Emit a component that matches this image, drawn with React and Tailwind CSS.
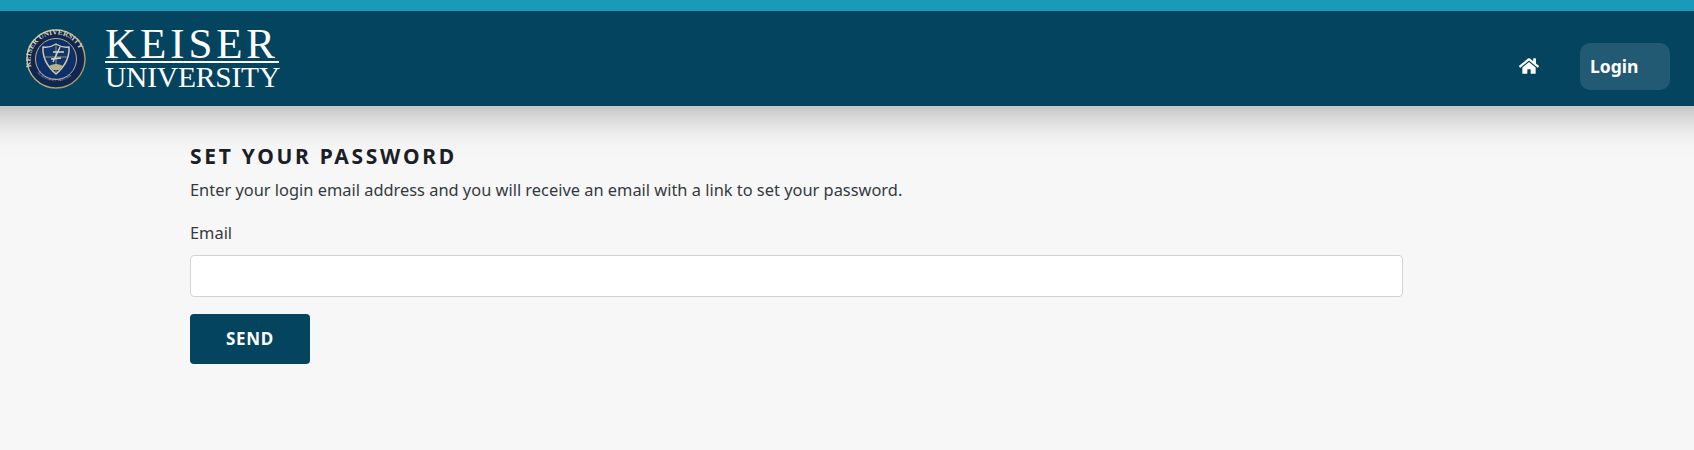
import React from "react";
import { FaHome } from "react-icons/fa";

function Seal() {
  return (
    <svg width="60" height="60" viewBox="0 0 60 60" className="shrink-0">
      <defs>
        <path id="ring" d="M5.5 38 A25.5 25.5 0 1 1 54.5 38" />
        <path id="ringb" d="M9 40 A24 24 0 0 0 51 40" />
        <linearGradient id="gold" x1="0" y1="0" x2="1" y2="1">
          <stop offset="0" stopColor="#d8d2a8" />
          <stop offset="1" stopColor="#9a8f58" />
        </linearGradient>
      </defs>
      <circle cx="30" cy="30" r="29" fill="#10264f" stroke="url(#gold)" strokeWidth="1.4" />
      <circle cx="30" cy="30" r="20.5" fill="#0d2f6b" stroke="#b9b184" strokeWidth="1" />
      <text fill="#d5d2bd" fontSize="7.4" fontWeight="700" fontFamily="'Liberation Serif', serif">
        <textPath href="#ring">KEISER UNIVERSITY</textPath>
      </text>
      <text fill="#aeb6c4" fontSize="3.6" fontFamily="'Liberation Sans', sans-serif">
        <textPath href="#ringb" startOffset="4">SCIENTIA ET VERITAS</textPath>
      </text>
      <path d="M17 18 Q24 19 30 15 Q36 19 43 18 Q44 33 30 45 Q16 33 17 18 Z" fill="#12356f" stroke="#cfc9a2" strokeWidth="1.5" />
      <path d="M30 16 V44 M19 28 H41" stroke="#8f9472" strokeWidth="1" />
      <path d="M34 18 L27 33 M27 23 L38 23 M25 30 L35 29" stroke="#d8d6c2" strokeWidth="1.4" fill="none" />
      <path d="M23 37 Q30 33 37 37 L33 41 H27 Z" fill="#b7b08a" />
    </svg>
  );
}

export default function App() {
  return (
    <div className="min-h-[450px] bg-[#f7f7f7] font-['Noto_Sans','Open_Sans',sans-serif] text-[#212529] overflow-hidden">
      <div className="relative z-10 h-[11px] bg-[#1a9ab9]" />
      <header className="relative mx-[-60px] h-[95px] bg-[#05445f] shadow-[0_0_40px_6px_rgba(0,0,0,0.32)] flex items-center pl-[86px] pr-[84px]">
        <Seal />
        <div className="ml-[19px] w-[174px] flex flex-col items-stretch text-white font-['Liberation_Serif',serif] mt-[-1px]">
          <div className="text-[43px] leading-[33px] tracking-[3.9px] text-center h-[33px] whitespace-nowrap">KEISER</div>
          <div className="h-[2px] bg-white mt-[1px]" />
          <div className="text-[29.5px] leading-[24px] text-center mt-[2px] tracking-[-0.2px] whitespace-nowrap">UNIVERSITY</div>
        </div>
        <nav className="ml-auto flex items-center mt-[15px]">
          <FaHome className="text-white text-[20px] mr-[41px]" />
          <a className="w-[90px] h-[47px] rounded-[10px] bg-[#215a72] text-white font-bold text-[17.5px] flex items-center pl-[10px]">Login</a>
        </nav>
      </header>
      <main className="w-[1213px] ml-[190px] pt-[36px]">
        <h1 className="text-[21px] leading-[28px] font-bold tracking-[2.7px] text-[#1b2026]">SET YOUR PASSWORD</h1>
        <p className="mt-[8px] text-[16.4px] leading-[24px] text-[#343a40]">Enter your login email address and you will receive an email with a link to set your password.</p>
        <label htmlFor="email" className="block mt-[19px] text-[16.4px] leading-[24px] text-[#343a40]">Email</label>
        <input id="email" type="email" className="block mt-[10px] w-full h-[42px] bg-white border border-[#d4d4d4] rounded-[4px]" />
        <button className="block mt-[17px] w-[120px] h-[50px] rounded-[4px] bg-[#05445f] text-white font-bold text-[17px] tracking-[0.7px]">SEND</button>
      </main>
    </div>
  );
}
